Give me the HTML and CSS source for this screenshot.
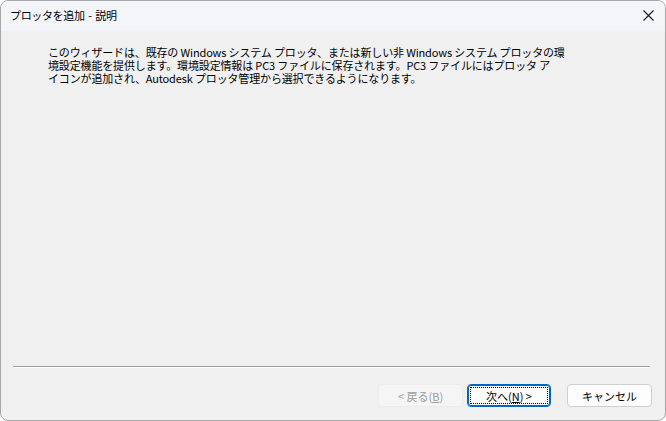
FILE: index.html
```html
<!DOCTYPE html>
<html lang="ja">
<head>
<meta charset="utf-8">
<link rel="stylesheet" href="styles.css">
</head>
<body>
<div class="window">
  <div class="titlebar">
    <span class="title">プロッタを追加 - 説明</span>
    <span class="close">
      <svg width="11" height="11" viewBox="0 0 11 11"><path d="M0.5 0.5 L10.5 10.5 M10.5 0.5 L0.5 10.5" stroke="#1a1a1a" stroke-width="1.1" fill="none"/></svg>
    </span>
  </div>
  <div class="content">
    <p class="desc">このウィザードは、既存の Windows システム プロッタ、または新しい非 Windows システム プロッタの環<br>境設定機能を提供します。環境設定情報は PC3 ファイルに保存されます。PC3 ファイルにはプロッタ ア<br>イコンが追加され、Autodesk プロッタ管理から選択できるようになります。</p>
  </div>
  <div class="footer">
    <div class="separator"></div>
    <div class="buttons">
      <button class="btn disabled">&lt; 戻る(<u>B</u>)</button>
      <button class="btn primary"><span class="focus">次へ(<u>N</u>) &gt;</span></button>
      <button class="btn cancel">キャンセル</button>
    </div>
  </div>
</div>
</body>
</html>
```
FILE: styles.css
```css
html, body {
  margin: 0;
  padding: 0;
  background: #ffffff;
}
body {
  width: 666px;
  height: 421px;
  font-family: "Noto Sans CJK JP", "Noto Sans", sans-serif;
  color: #000;
}
.window {
  box-sizing: border-box;
  width: 666px;
  height: 421px;
  border: 1px solid #a7a7a7;
  border-radius: 8px;
  overflow: hidden;
  background: #f0f0f0;
  display: flex;
  flex-direction: column;
}
.titlebar {
  box-sizing: border-box;
  height: 30px;
  background: #f3f5f8;
  display: flex;
  align-items: center;
  justify-content: space-between;
  padding: 0 11px 2px 9px;
  flex: none;
}
.title {
  font-size: 11px;
  color: #000;
  letter-spacing: -0.35px;
  word-spacing: 1.5px;
}
.close {
  display: flex;
  width: 11px;
  height: 11px;
}
.content {
  flex: 1;
  padding: 15px 0 0 47px;
}
.desc {
  margin: 0;
  font-size: 11px;
  line-height: 13px;
  letter-spacing: -0.15px;
  white-space: nowrap;
}
.footer {
  flex: none;
  padding: 0 13px 13px 12px;
}
.separator {
  height: 1px;
  background: #a0a0a0;
  border-bottom: 1px solid #ffffff;
  margin-right: 2px;
}
.buttons {
  display: flex;
  justify-content: flex-end;
  margin-top: 16px;
  gap: 4px;
}
.btn {
  box-sizing: border-box;
  height: 23px;
  width: 85px;
  font-family: "Noto Sans CJK JP", "Noto Sans", sans-serif;
  font-size: 11px;
  border-radius: 4px;
  border: 1px solid #d0d0d0;
  background: #fdfdfd;
  color: #000;
  padding: 0;
  display: flex;
  align-items: center;
  justify-content: center;
}
.btn.disabled {
  background: #f5f5f5;
  border-color: #ececec;
  color: #9c9c9c;
}
.btn.primary {
  width: 84px;
  border: 1px solid #0067c0;
  box-shadow: inset 0 0 0 1px #0067c0;
  background: #fdfdfd;
  padding: 2px;
}
.focus {
  box-sizing: border-box;
  width: 100%;
  height: 100%;
  border: 1px dotted #000;
  display: flex;
  align-items: center;
  justify-content: center;
}
.btn.cancel {
  margin-left: 12px;
}
```
